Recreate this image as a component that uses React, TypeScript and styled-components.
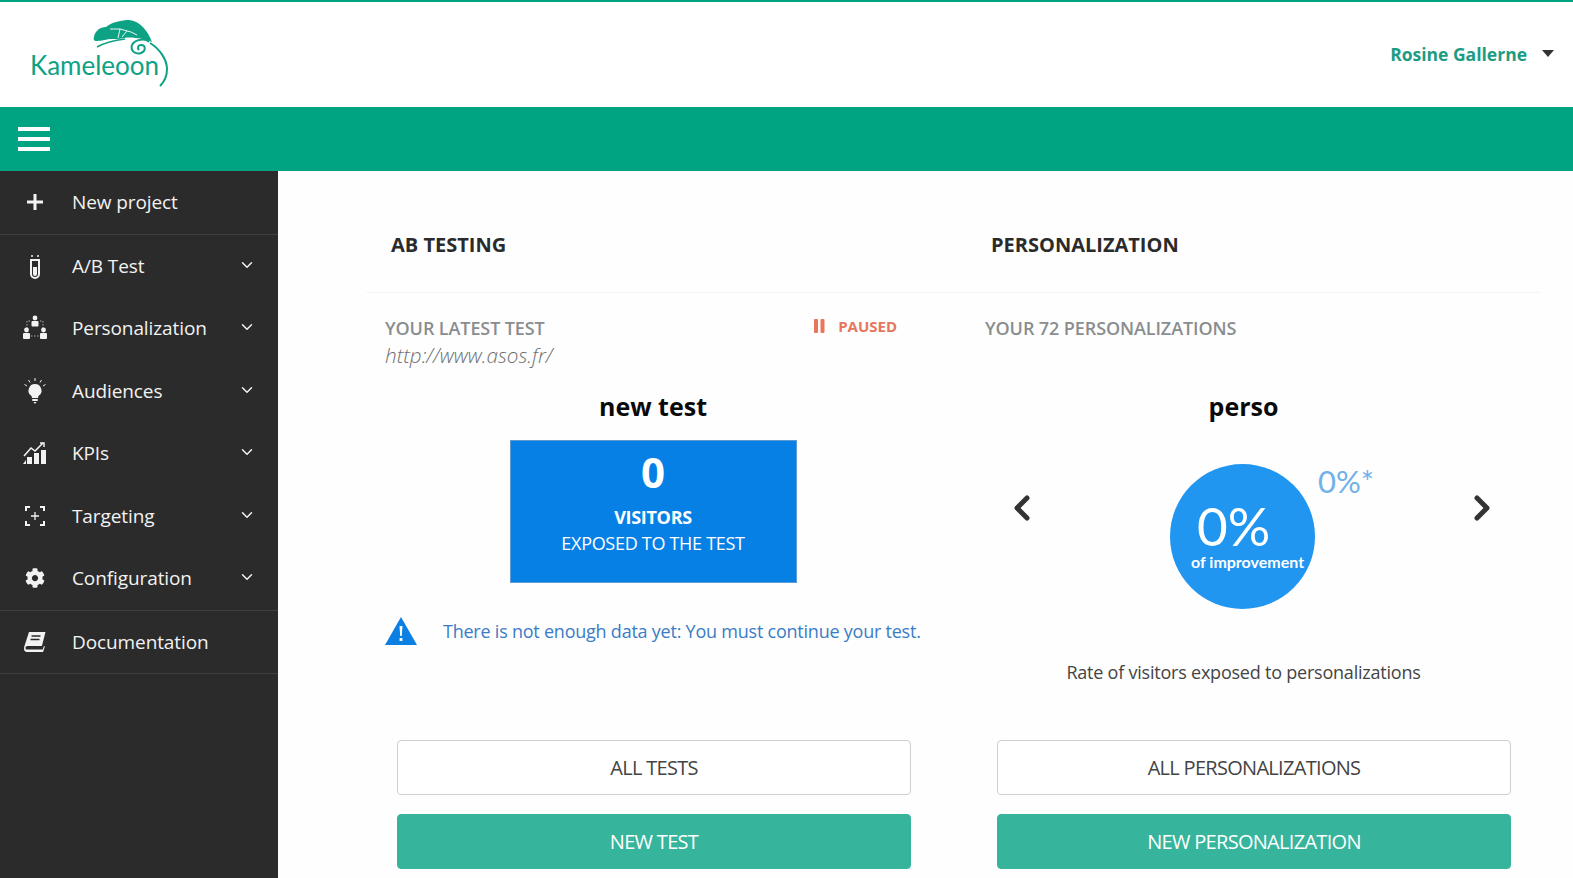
import React from "react";
import styled, { createGlobalStyle } from "styled-components";
import { ChevronDown, ChevronLeft, ChevronRight } from "lucide-react";
import { FaCog } from "react-icons/fa";

const GlobalStyle = createGlobalStyle`
  html, body {
    margin: 0;
    height: 100%;
    overflow: hidden;
    background: #fefefe;
    font-family: "Open Sans", "Liberation Sans", sans-serif;
  }
  * { box-sizing: border-box; }
`;

const Page = styled.div`
  height: 878px;
  display: flex;
  flex-direction: column;
  overflow: hidden;
`;

const Header = styled.header`
  height: 107px;
  flex: none;
  background: #fff;
  border-top: 2px solid #00a482;
  display: flex;
  align-items: center;
  justify-content: space-between;
  padding-right: 19px;
`;

const LogoBox = styled.svg`
  display: block;
  width: 200px;
  height: 105px;
`;

const UserMenu = styled.div`
  display: flex;
  align-items: center;
  gap: 15px;
  margin-top: -2px;
`;

const UserName = styled.span`
  font-size: 17.5px;
  font-weight: 700;
  color: #1c9c82;
`;

const Caret = styled.span`
  width: 0;
  height: 0;
  border-left: 6px solid transparent;
  border-right: 6px solid transparent;
  border-top: 7px solid #333;
`;

const TopBar = styled.div`
  height: 64px;
  flex: none;
  background: #00a482;
  display: flex;
  align-items: center;
  padding-left: 18px;
`;

const Burger = styled.div`
  width: 32px;
  display: flex;
  flex-direction: column;
  gap: 6px;
  span {
    display: block;
    height: 4px;
    background: #fff;
  }
`;

const Body = styled.div`
  flex: 1;
  display: flex;
  min-height: 0;
`;

const Sidebar = styled.nav`
  width: 278px;
  flex: none;
  background: #2b2b2b;
`;

const NavGroup = styled.div`
  border-bottom: 1px solid #3f3f3f;
`;

const NavRow = styled.div`
  height: 62.5px;
  display: flex;
  align-items: center;
  color: #f2f2f2;
`;

const NavIcon = styled.span`
  width: 72px;
  flex: none;
  display: flex;
  justify-content: center;
  padding-right: 2px;
  svg { display: block; }
`;

const NavLabel = styled.span`
  flex: 1;
  font-size: 19px;
  letter-spacing: -0.1px;
`;

const NavCaret = styled.span`
  width: 62px;
  flex: none;
  display: flex;
  justify-content: center;
  margin-top: -2px;
  padding-right: 1px;
`;

const Main = styled.main`
  flex: 1;
  display: grid;
  grid-template-columns: 600px 1fr;
  padding: 0 33px 0 107px;
  align-content: start;
`;

const Column = styled.section`
  display: flex;
  flex-direction: column;
`;

const ColumnHead = styled.div`
  height: 122px;
  margin-left: -19px;
  padding: 60px 0 0 25px;
  border-bottom: 1px solid #f5f5f3;
`;

const ColumnTitle = styled.h2`
  margin: 0;
  font-size: 20px;
  line-height: 28px;
  font-weight: 700;
  color: #2b2b2b;
`;

const Panel = styled.div<{ $width: number }>`
  width: ${(p) => p.$width}px;
  height: 447px;
  padding-top: 23px;
  display: flex;
  flex-direction: column;
`;

const MetaRow = styled.div`
  display: flex;
  justify-content: space-between;
  align-items: flex-start;
  padding-right: 24px;
`;

const MetaLabel = styled.div`
  font-size: 18px;
  line-height: 24px;
  font-weight: 600;
  color: #8a8d8f;
  letter-spacing: -0.1px;
`;

const MetaUrl = styled.div`
  font-size: 20.7px;
  line-height: 30px;
  font-style: italic;
  font-weight: 300;
  color: #6d6f71;
`;

const Status = styled.div`
  display: flex;
  align-items: center;
  gap: 13px;
  font-size: 15px;
  line-height: 20px;
  font-weight: 700;
  color: #e8765c;
`;

const ItemName = styled.div<{ $top: number }>`
  margin-top: ${(p) => p.$top}px;
  text-align: center;
  font-size: 25px;
  line-height: 36px;
  font-weight: 700;
  color: #0a0a0a;
`;

const VisitorBox = styled.div`
  flex: none;
  width: 287px;
  height: 143px;
  margin: 16px auto 0;
  background: #0780e6;
  border: 1px solid #5f9ad0;
  color: #fff;
  text-align: center;
  padding-top: 3px;
`;

const VisitorCount = styled.div`
  font-size: 42px;
  line-height: 56px;
  font-weight: 700;
`;

const VisitorTitle = styled.div`
  margin-top: 4px;
  font-size: 18px;
  line-height: 26px;
  font-weight: 700;
  letter-spacing: -0.3px;
`;

const VisitorText = styled.div`
  font-size: 18px;
  line-height: 26px;
  letter-spacing: -0.3px;
`;

const Notice = styled.div`
  margin-top: 33px;
  display: flex;
  align-items: center;
  gap: 26px;
  font-size: 18px;
  line-height: 30px;
  color: #3a7cc6;
  letter-spacing: -0.23px;
  white-space: nowrap;
  svg { flex: none; }
`;

const Carousel = styled.div`
  position: relative;
  flex: none;
  height: 146px;
  margin-top: 40px;
  display: flex;
  align-items: flex-start;
  justify-content: space-between;
  padding: 24px 0 0 17px;
  color: #333;
`;

const Dial = styled.div`
  position: absolute;
  left: 185px;
  top: 0;
  width: 145px;
  height: 145px;
  border-radius: 50%;
  background: #2196f0;
  color: #fff;
  font-family: Lato, "Open Sans", sans-serif;
`;

const DialValue = styled.div`
  margin: 37px 0 0 27px;
  font-size: 53px;
  line-height: 50px;
  font-weight: 400;
`;

const DialCaption = styled.div`
  margin: 1px 0 0 21px;
  font-size: 16px;
  line-height: 20px;
  font-weight: 700;
  white-space: nowrap;
`;

const DialNote = styled.div`
  position: absolute;
  left: 333px;
  top: -1px;
  font-family: Lato, "Open Sans", sans-serif;
  font-size: 31px;
  line-height: 36px;
  font-weight: 400;
  color: #6fb1e8;
`;

const Caption = styled.div`
  margin-top: 48px;
  text-align: center;
  font-size: 18px;
  line-height: 28px;
  color: #444;
  letter-spacing: -0.22px;
`;

const Actions = styled.div`
  margin-left: 12px;
  width: 514px;
  display: flex;
  flex-direction: column;
  gap: 19px;
`;

const ActionButton = styled.button<{ $primary?: boolean }>`
  height: 55px;
  border-radius: 4px;
  border: 1px solid ${(p) => (p.$primary ? "#36b59c" : "#cfcfcf")};
  background: ${(p) => (p.$primary ? "#36b59c" : "#fff")};
  color: ${(p) => (p.$primary ? "#fff" : "#444")};
  font-family: inherit;
  font-size: 20px;
  letter-spacing: -0.7px;
  cursor: pointer;
`;

const KameleoonLogo = () => (
  <LogoBox viewBox="0 2 200 105" role="img" aria-label="Kameleoon">
    <path
      d="M94 37C95 31 100 27 106 27C112 22 122 20 129 20C140 21 148 31 152 42C146 39 140 38 135 38C129 37 124 38 118 39L110 39C105 40 99 41 96 41C94 41 93 39 94 37Z"
      fill="#0ea285"
    />
    <path d="M110 29L120 29L118 38M120 29L131 32L137 35M127 31L122 37" fill="none" stroke="#fff" strokeWidth="0.9" />
    <path d="M97 47C106 42 116 40 125 39" fill="none" stroke="#0ea285" strokeWidth="1.6" />
    <path
      d="M149 42C146 38 135 39 132 45C130 51 136 55 141 53C146 51 146 45 141 45C138 45 137 48 139 50"
      fill="none"
      stroke="#0ea285"
      strokeWidth="2"
    />
    <path d="M150 43C160 49 167 60 167 69C167 76 164 82 160 86" fill="none" stroke="#0ea285" strokeWidth="2" />
    <text
      x="30"
      y="75"
      fontFamily="Lato, sans-serif"
      fontSize="26"
      fontWeight="400"
      fill="#0ea285"
      textLength="129"
      lengthAdjust="spacingAndGlyphs"
    >
      Kameleoon
    </text>
  </LogoBox>
);

const TubeIcon = () => (
  <svg width="18" height="26" viewBox="0 0 18 26" fill="none" stroke="#f2f2f2">
    <path d="M4 7h10M5 7v14a4 4 0 0 0 8 0V7" strokeWidth="2" />
    <path d="M7 14h4v7a2 2 0 0 1-4 0z" fill="#f2f2f2" stroke="none" />
    <path d="M6 2v2M12 2v2" strokeWidth="1.5" />
  </svg>
);

const PeopleIcon = () => (
  <svg width="26" height="26" viewBox="0 0 26 26" fill="#f2f2f2">
    <path d="M8 6H5v8M18 6h3v8M9 21h8" fill="none" stroke="#aaa" strokeWidth="1" strokeDasharray="1.5 1.5" />
    <circle cx="13" cy="3" r="2.4" />
    <rect x="9.5" y="6" width="7" height="5.5" rx="1" />
    <circle cx="4.5" cy="15" r="2.4" />
    <rect x="1" y="18" width="7" height="6" rx="1" />
    <circle cx="21.5" cy="15" r="2.4" />
    <rect x="18" y="18" width="7" height="6" rx="1" />
  </svg>
);

const BulbIcon = () => (
  <svg width="22" height="26" viewBox="0 0 22 26" fill="#f2f2f2">
    <path d="M11 6a6.5 6.5 0 0 0-4 11.6c.6.6 1 1.4 1 2.4h6c0-1 .4-1.8 1-2.4A6.5 6.5 0 0 0 11 6z" />
    <rect x="8" y="21" width="6" height="2" rx="1" />
    <path d="M9.5 24h3l-1 1.6h-1z" />
    <path d="M11 0v3M4.5 2l1.5 2.5M17.5 2 16 4.5M0.5 6.5 3 8M21.5 6.5 19 8" stroke="#f2f2f2" strokeWidth="1" fill="none" />
  </svg>
);

const ChartIcon = () => (
  <svg width="24" height="22" viewBox="0 0 24 22" fill="#f2f2f2">
    <path d="M4 15h5v7H4zM11 11h5v11h-5zM18 8h5v14h-5z" />
    <path d="M1 14 8 6l4 3 8-8" fill="none" stroke="#f2f2f2" strokeWidth="1.5" />
    <path d="M17 1h4v4" fill="none" stroke="#f2f2f2" strokeWidth="1.5" />
    <path d="M0 22l3-4v4z" />
  </svg>
);

const TargetIcon = () => (
  <svg width="22" height="22" viewBox="0 0 22 22" fill="none" stroke="#f2f2f2">
    <path d="M6 2H2v4M16 2h4v4M6 20H2v-4M16 20h4v-4" strokeWidth="2" />
    <path d="M11 7v8M7 11h8" strokeWidth="1.3" />
  </svg>
);

const BookIcon = () => (
  <svg width="22" height="20" viewBox="0 0 22 20" fill="#f2f2f2">
    <path d="M5 0h16.500l-3.600 14H3.500C2 14 1.500 15 1.500 16c0 1 .7 1.600 2 1.600h15.300l.9-3.200 1.300-.4-1.900 6H3C1 20 0 18.500 0 16.500 0 15.800.1 15 .4 14.200z" />
    <path d="M7.500 4h9M6.500 7.500h9" stroke="#2b2b2b" strokeWidth="1.300" />
  </svg>
);

const PlusIcon = () => (
  <svg width="16" height="16" viewBox="0 0 16 16" fill="#f4f4f4">
    <path d="M6.500 0h3v6.500H16v3H9.500V16h-3V9.500H0v-3h6.500z" />
  </svg>
);

const PauseIcon = () => (
  <svg width="11" height="14" viewBox="0 0 11 14" fill="#e8765c">
    <rect x="0" y="0" width="4" height="14" rx="1" />
    <rect x="6.500" y="0" width="4" height="14" rx="1" />
  </svg>
);

const WarningIcon = () => (
  <svg width="32" height="28" viewBox="0 0 32 28">
    <path d="M16 0 32 28H0z" fill="#0b7fe2" />
    <path d="M14.500 9h3l-.7 10h-1.600z" fill="#fff" />
    <rect x="14.600" y="21" width="2.800" height="3" fill="#fff" />
  </svg>
);

const navGroups = [
  [{ label: "New project", icon: <PlusIcon /> }],
  [
    { label: "A/B Test", icon: <TubeIcon />, more: true },
    { label: "Personalization", icon: <PeopleIcon />, more: true },
    { label: "Audiences", icon: <BulbIcon />, more: true },
    { label: "KPIs", icon: <ChartIcon />, more: true },
    { label: "Targeting", icon: <TargetIcon />, more: true },
    { label: "Configuration", icon: <FaCog size={20} />, more: true },
  ],
  [{ label: "Documentation", icon: <BookIcon /> }],
];

const App = () => {
  return (
    <Page>
      <GlobalStyle />
      <Header>
        <KameleoonLogo />
        <UserMenu>
          <UserName>Rosine Gallerne</UserName>
          <Caret />
        </UserMenu>
      </Header>
      <TopBar>
        <Burger>
          <span />
          <span />
          <span />
        </Burger>
      </TopBar>
      <Body>
        <Sidebar>
          {navGroups.map((group, index) => (
            <NavGroup key={index}>
              {group.map((item) => (
                <NavRow key={item.label}>
                  <NavIcon>{item.icon}</NavIcon>
                  <NavLabel>{item.label}</NavLabel>
                  {"more" in item && (
                    <NavCaret>
                      <ChevronDown size={18} strokeWidth={2} />
                    </NavCaret>
                  )}
                </NavRow>
              ))}
            </NavGroup>
          ))}
        </Sidebar>
        <Main>
          <Column>
            <ColumnHead>
              <ColumnTitle>AB TESTING</ColumnTitle>
            </ColumnHead>
            <Panel $width={536}>
              <MetaRow>
                <div>
                  <MetaLabel>YOUR LATEST TEST</MetaLabel>
                  <MetaUrl>http://www.asos.fr/</MetaUrl>
                </div>
                <Status>
                  <PauseIcon />
                  PAUSED
                </Status>
              </MetaRow>
              <ItemName $top={18}>new test</ItemName>
              <VisitorBox>
                <VisitorCount>0</VisitorCount>
                <VisitorTitle>VISITORS</VisitorTitle>
                <VisitorText>EXPOSED TO THE TEST</VisitorText>
              </VisitorBox>
              <Notice>
                <WarningIcon />
                There is not enough data yet: You must continue your test.
              </Notice>
            </Panel>
            <Actions>
              <ActionButton>ALL TESTS</ActionButton>
              <ActionButton $primary>NEW TEST</ActionButton>
            </Actions>
          </Column>
          <Column>
            <ColumnHead>
              <ColumnTitle>PERSONALIZATION</ColumnTitle>
            </ColumnHead>
            <Panel $width={517}>
              <MetaLabel>YOUR 72 PERSONALIZATIONS</MetaLabel>
              <ItemName $top={48}>perso</ItemName>
              <Carousel>
                <ChevronLeft size={40} strokeWidth={3} />
                <Dial>
                  <DialValue>0%</DialValue>
                  <DialCaption>of improvement</DialCaption>
                </Dial>
                <DialNote>0%*</DialNote>
                <ChevronRight size={40} strokeWidth={3} />
              </Carousel>
              <Caption>Rate of visitors exposed to personalizations</Caption>
            </Panel>
            <Actions>
              <ActionButton>ALL PERSONALIZATIONS</ActionButton>
              <ActionButton $primary>NEW PERSONALIZATION</ActionButton>
            </Actions>
          </Column>
        </Main>
      </Body>
    </Page>
  );
};

export default App;
